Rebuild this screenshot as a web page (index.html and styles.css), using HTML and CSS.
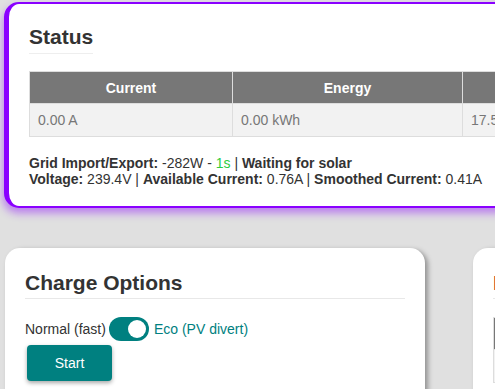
FILE: index.html
```html
<!DOCTYPE html>
<html lang="en">

<head>
    <meta charset="UTF-8">
    <meta name="viewport" content="width=device-width, initial-scale=1.0">
    <title>EVSE Status</title>
    <link rel="stylesheet" href="styles.css">
</head>

<body>
    <div class="page">
        <div class="status-card">
            <h2 class="status-title">Status</h2>
            <table class="tbl">
                <tr>
                    <th class="c1">Current</th>
                    <th class="c2">Energy</th>
                    <th>Temperature</th>
                    <th>Time</th>
                </tr>
                <tr>
                    <td>0.00 A</td>
                    <td>0.00 kWh</td>
                    <td>17.5 &deg;C</td>
                    <td>00:00:00</td>
                </tr>
            </table>
            <p class="info">
                <b>Grid Import/Export:</b> -282W - <span class="green">1s</span> | <b>Waiting for solar</b><br>
                <b>Voltage:</b> 239.4V | <b>Available Current:</b> 0.76A | <b>Smoothed Current:</b> 0.41A
            </p>
        </div>

        <div class="row">
            <div class="card">
                <h2 class="card-title">Charge Options</h2>
                <div class="mode">
                    <span>Normal (fast)</span>
                    <span class="toggle"><span class="knob"></span></span>
                    <span class="eco">Eco (PV divert)</span>
                </div>
                <button class="btn">Start</button>
            </div>
            <div class="card">
                <h2 class="card-title red">Diagnostics</h2>
                <table class="tbl small">
                    <tr>
                        <th>Sensor</th>
                        <th>Value</th>
                    </tr>
                    <tr>
                        <td>Pilot</td>
                        <td>12V</td>
                    </tr>
                </table>
            </div>
        </div>
    </div>
</body>

</html>
```

FILE: styles.css
```css
* {
    margin: 0px;
    padding: 0px;
    box-sizing: border-box;
}

html,
body {
    height: 100%;
    overflow: hidden;
}

body {
    background-color: #e0e0e0;
    font-family: "Liberation Sans", Arial, sans-serif;
    font-size: 14px;
    color: #333;
}

.page {
    padding: 2px 0 0 4px;
    width: 1200px;
}

.status-card {
    width: 800px;
    background-color: #fff;
    border: 2px solid #8a00ff;
    border-left-width: 5px;
    border-radius: 15px;
    padding: 21px 20px 19px 20px;
    box-shadow: -1px 5px 8px rgba(138, 0, 255, 0.45);
}

.status-title {
    display: inline-block;
    font-size: 21px;
    line-height: 24px;
    padding-bottom: 4px;
    border-bottom: 1px solid #eee;
    color: #333;
}

.tbl {
    border-collapse: collapse;
    margin-top: 17px;
    border: 1px solid #ddd;
    width: 740px;
}

.tbl th {
    background-color: #777;
    color: #fff;
    font-weight: bold;
    height: 32px;
    padding: 0 8px;
    text-align: center;
    border-right: 1px solid #ddd;
}

.tbl td {
    background-color: #f2f2f2;
    color: #777;
    height: 33px;
    padding: 0 8px;
    border-right: 1px solid #ddd;
    border-top: 1px solid #ddd;
}

.c1 {
    width: 203px;
}

.c2 {
    width: 230px;
}

.info {
    margin-top: 18px;
    line-height: 16px;
}

.green {
    color: #2ecc40;
}

.row {
    display: flex;
    gap: 48px;
    margin-top: 40px;
    padding-left: 1px;
}

.card {
    width: 420px;
    height: 200px;
    background-color: #fff;
    border-radius: 15px;
    padding: 23px 20px 20px 20px;
    box-shadow: 3px 2px 5px rgba(0, 0, 0, 0.35);
}

.card-title {
    font-size: 21px;
    line-height: 24px;
    padding-bottom: 3px;
    border-bottom: 1px solid #e8e8e8;
    color: #333;
}

.red {
    color: #a8231a;
}

.mode {
    display: flex;
    align-items: center;
    margin-top: 18px;
    height: 24px;
}

.toggle {
    width: 40px;
    height: 24px;
    border-radius: 12px;
    background-color: #008080;
    margin: 0 5px 0 3px;
    position: relative;
}

.knob {
    position: absolute;
    top: 3px;
    right: 3px;
    width: 18px;
    height: 18px;
    border-radius: 50%;
    background-color: #fff;
}

.eco {
    color: #008080;
}

.btn {
    display: block;
    margin: 4px 0 0 2px;
    width: 85px;
    height: 36px;
    border: none;
    border-radius: 4px;
    background-color: #008080;
    color: #fff;
    font-family: "Liberation Sans", Arial, sans-serif;
    font-size: 14px;
    box-shadow: 0 2px 4px rgba(0, 0, 0, 0.35);
}

.small {
    margin-top: 18px;
    width: 380px;
}
```
